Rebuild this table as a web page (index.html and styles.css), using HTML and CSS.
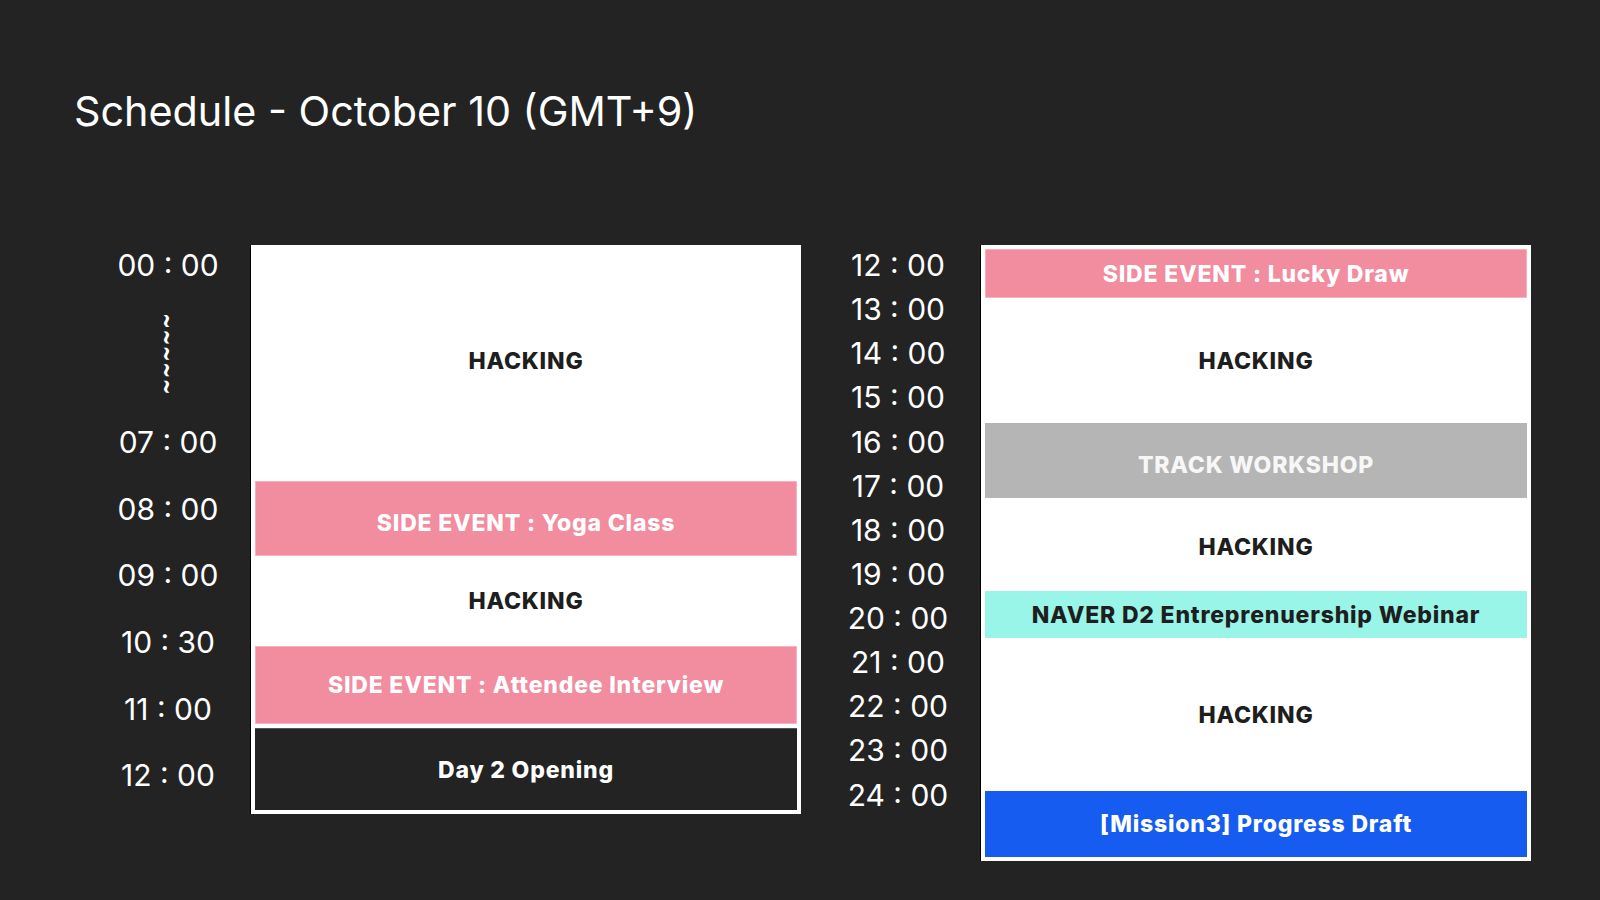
FILE: index.html
```html
<!DOCTYPE html>
<html lang="en">
<head>
<meta charset="utf-8">
<title>Schedule - October 10 (GMT+9)</title>
<link rel="stylesheet" href="styles.css">
</head>
<body>
<main class="page">
  <h1 class="title">Schedule - October 10 (GMT+9)</h1>
  <section class="columns">
    <div class="group">
      <div class="times times-am">
        <div class="time t-first">00 : 00</div>
        <div class="skip"><span class="waves">~~~~~</span></div>
        <div class="time t-am">07 : 00</div>
        <div class="time t-am">08 : 00</div>
        <div class="time t-am">09 : 00</div>
        <div class="time t-am">10 : 30</div>
        <div class="time t-am">11 : 00</div>
        <div class="time t-am">12 : 00</div>
      </div>
      <div class="board board-am">
        <div class="slot plain lift" style="height:232px">HACKING</div>
        <div class="slot pink drop" style="height:75px">SIDE EVENT : Yoga Class</div>
        <div class="slot plain" style="height:90px">HACKING</div>
        <div class="slot pink" style="height:78px">SIDE EVENT : Attendee Interview</div>
        <div class="slot spacer" style="height:4px"></div>
        <div class="slot dark" style="height:82px">Day 2 Opening</div>
      </div>
    </div>
    <div class="group">
      <div class="times times-pm">
        <div class="time t-pm">12 : 00</div>
        <div class="time t-pm">13 : 00</div>
        <div class="time t-pm">14 : 00</div>
        <div class="time t-pm">15 : 00</div>
        <div class="time t-pm">16 : 00</div>
        <div class="time t-pm">17 : 00</div>
        <div class="time t-pm">18 : 00</div>
        <div class="time t-pm">19 : 00</div>
        <div class="time t-pm">20 : 00</div>
        <div class="time t-pm">21 : 00</div>
        <div class="time t-pm">22 : 00</div>
        <div class="time t-pm">23 : 00</div>
        <div class="time t-pm">24 : 00</div>
      </div>
      <div class="board board-pm">
        <div class="slot pink" style="height:49px">SIDE EVENT : Lucky Draw</div>
        <div class="slot plain" style="height:125px">HACKING</div>
        <div class="slot grey drop" style="height:75px">TRACK WORKSHOP</div>
        <div class="slot plain drop-sm" style="height:93px">HACKING</div>
        <div class="slot mint" style="height:47px">NAVER D2 Entreprenuership Webinar</div>
        <div class="slot plain" style="height:153px">HACKING</div>
        <div class="slot blue" style="height:66px">[Mission3] Progress Draft</div>
      </div>
    </div>
  </section>
</main>
</body>
</html>
```

FILE: styles.css
```css
* {
  box-sizing: border-box;
}

html, body {
  margin: 0;
  padding: 0;
  background: #232323;
}

body {
  width: 1600px;
  height: 900px;
  overflow: hidden;
  font-family: "Inter", "Noto Sans", sans-serif;
  color: #ffffff;
}

.title {
  margin: 0;
  padding: 86px 0 0 74px;
  height: 245px;
  font-size: 41.3px;
  font-weight: 400;
  line-height: 50px;
  color: #ffffff;
}

.columns {
  display: flex;
  gap: 29px;
  padding-left: 100px;
}

.group {
  display: flex;
  gap: 14px;
  align-items: flex-start;
}

.times {
  width: 136px;
  display: flex;
  flex-direction: column;
  align-items: center;
}

.time {
  display: flex;
  align-items: center;
  justify-content: center;
  font-size: 30px;
  font-weight: 400;
  color: #ffffff;
  white-space: nowrap;
}

.t-first {
  height: 40px;
}

.skip {
  height: 124px;
  display: flex;
  align-items: center;
  justify-content: center;
  padding-top: 14px;
}

.waves {
  display: block;
  writing-mode: vertical-rl;
  font-family: "DejaVu Sans", sans-serif;
  font-weight: 700;
  font-size: 19px;
  line-height: 20px;
  letter-spacing: 0.5px;
  color: #ffffff;
  transform: scaleX(1.4);
}

.t-am {
  height: 66.6px;
}

.times-pm {
  margin-top: -2px;
}

.t-pm {
  height: 44.14px;
}

.board {
  width: 551px;
  background: #ffffff;
  padding: 4px;
  display: flex;
  flex-direction: column;
  border-left: 1px solid #000;
}

.slot {
  display: flex;
  align-items: center;
  justify-content: center;
  font-weight: 800;
  font-size: 23px;
  letter-spacing: 0.8px;
  white-space: nowrap;
}

.lift {
  padding-bottom: 8px;
}

.drop {
  padding-top: 8px;
}

.drop-sm {
  padding-top: 4px;
}

.plain {
  background: #ffffff;
  color: #1e1e1e;
}

.pink {
  background: #f28c9f;
  color: #ffffff;
  border: 1px solid #f6b3bf;
}

.grey {
  background: #b5b5b5;
  color: #f7f7f7;
}

.mint {
  background: #98f5e8;
  color: #1e1e1e;
}

.blue {
  background: #175cf0;
  color: #ffffff;
}

.dark {
  background: #232323;
  color: #ffffff;
  border-top: 1px solid #555;
}

.spacer {
  background: #ffffff;
}
```
